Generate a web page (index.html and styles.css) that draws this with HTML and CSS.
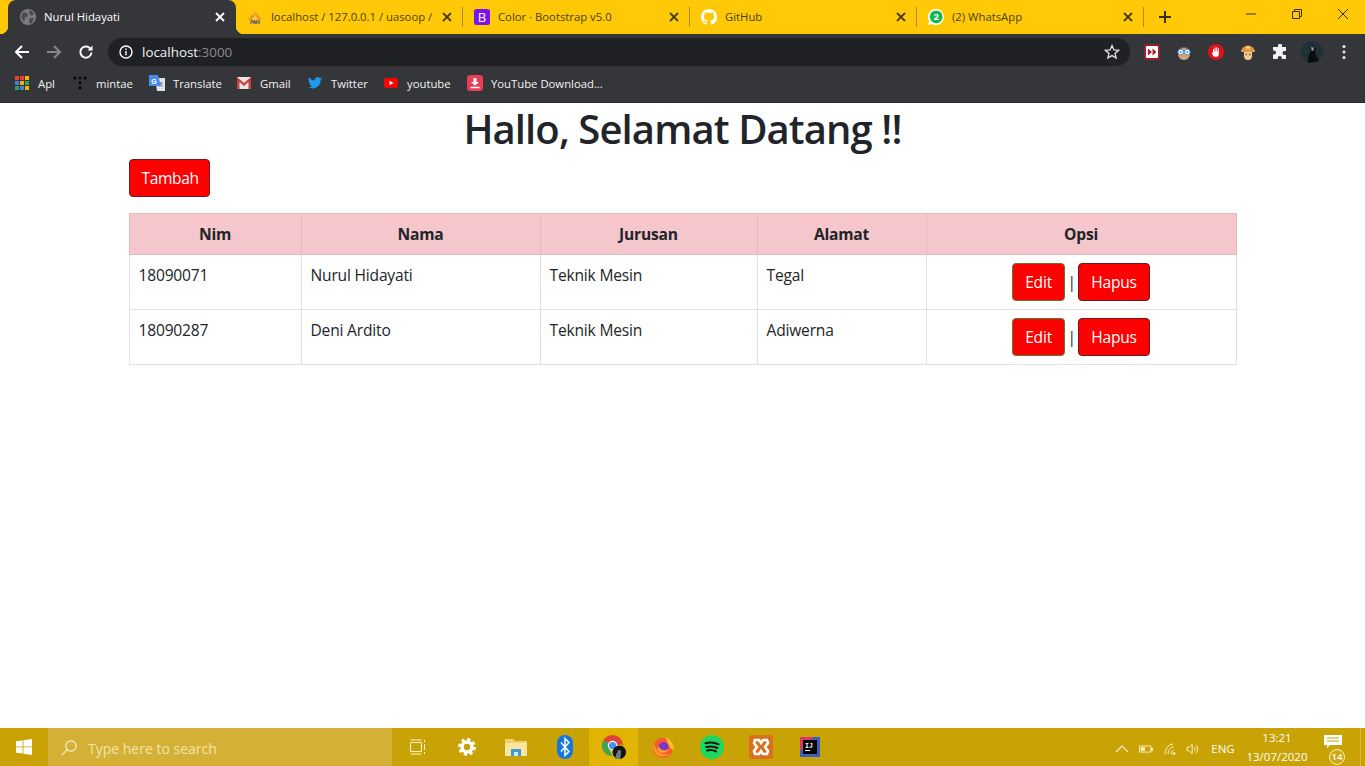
FILE: index.html
```html
<!DOCTYPE html>
<html lang="en">
<head>
  <meta charset="UTF-8" />
  <meta name="viewport" content="width=device-width, initial-scale=1.0"/>
  <title>Nurul Hidayati</title>
  <link rel="stylesheet" href="styles.css">
</head>
<body>
  <div class="browser">
    <div class="tabstrip">
      <div class="tab active">
        <svg class="favicon" viewBox="0 0 16 16"><circle cx="8" cy="8" r="8" fill="#7b7d82"/><path d="M3 3l4 1 1 3-3 2-1 4-3-5zM10 1l4 3-2 3-2-1-1-3zM10 9l4 0-2 5-2 1-1-3z" fill="#4a4c50"/></svg>
        <span class="tab-title">Nurul Hidayati</span>
        <svg class="tab-close" viewBox="0 0 10 10"><path d="M1 1l8 8M9 1l-8 8"/></svg>
      </div>
      <div class="tab">
        <svg class="favicon" viewBox="0 0 16 16"><path d="M1 11L6 4l1 2 2-4 1 4 1-1 4 6z" fill="#f29a1f"/><path d="M5 11l3-5 3 5z" fill="#fbc65a"/><rect x="0" y="11.5" width="16" height="3.5" fill="#ffc907"/><text x="8" y="15" class="pma">PMA</text></svg>
        <span class="tab-title">localhost / 127.0.0.1 / uasoop /</span>
        <svg class="tab-close" viewBox="0 0 10 10"><path d="M1 1l8 8M9 1l-8 8"/></svg>
      </div>
      <span class="tab-sep"></span>
      <div class="tab">
        <svg class="favicon" viewBox="0 0 16 16"><rect width="16" height="16" rx="2.5" fill="#7b14ea"/><text x="8" y="12.6" class="boot">B</text></svg>
        <span class="tab-title">Color · Bootstrap v5.0</span>
        <svg class="tab-close" viewBox="0 0 10 10"><path d="M1 1l8 8M9 1l-8 8"/></svg>
      </div>
      <span class="tab-sep"></span>
      <div class="tab">
        <svg class="favicon" viewBox="0 0 16 16"><path fill="#fff" d="M8 0C3.58 0 0 3.58 0 8c0 3.54 2.29 6.53 5.47 7.59.4.07.55-.17.55-.38 0-.19-.01-.82-.01-1.49-2.01.37-2.53-.49-2.69-.94-.09-.23-.48-.94-.82-1.13-.28-.15-.68-.52-.01-.53.63-.01 1.08.58 1.23.82.72 1.21 1.87.87 2.33.66.07-.52.28-.87.51-1.07-1.78-.2-3.64-.89-3.64-3.95 0-.87.31-1.59.82-2.15-.08-.2-.36-1.02.08-2.12 0 0 .67-.21 2.2.82.64-.18 1.32-.27 2-.27.68 0 1.36.09 2 .27 1.53-1.04 2.2-.82 2.2-.82.44 1.1.16 1.92.08 2.12.51.56.82 1.27.82 2.15 0 3.07-1.87 3.75-3.65 3.95.29.25.54.73.54 1.48 0 1.07-.01 1.93-.01 2.2 0 .21.15.46.55.38A8.013 8.013 0 0016 8c0-4.42-3.58-8-8-8z"/></svg>
        <span class="tab-title">GitHub</span>
        <svg class="tab-close" viewBox="0 0 10 10"><path d="M1 1l8 8M9 1l-8 8"/></svg>
      </div>
      <span class="tab-sep"></span>
      <div class="tab">
        <svg class="favicon" viewBox="0 0 16 16"><path d="M8 0a8 8 0 0 0-6.8 12.2L0 16l3.9-1.1A8 8 0 1 0 8 0z" fill="#fff"/><circle cx="8.2" cy="7.8" r="6.4" fill="#12b84f"/><text x="8.2" y="11.2" class="wa">2</text></svg>
        <span class="tab-title">(2) WhatsApp</span>
        <svg class="tab-close" viewBox="0 0 10 10"><path d="M1 1l8 8M9 1l-8 8"/></svg>
      </div>
      <span class="tab-sep"></span>
      <svg class="new-tab" viewBox="0 0 12 12"><path d="M6 0v12M0 6h12"/></svg>
      <div class="window-controls">
        <svg viewBox="0 0 46 28"><path d="M19 14h10"/></svg>
        <svg viewBox="0 0 46 28"><path d="M19.5 11.5h7v7h-7zM21.5 11.5v-2h7v7h-2"/></svg>
        <svg viewBox="0 0 46 28"><path d="M19 9l10 10M29 9L19 19"/></svg>
      </div>
    </div>

    <div class="toolbar">
      <svg class="nav-icon" viewBox="0 0 16 16"><path d="M15 8H2M8 2L2 8l6 6"/></svg>
      <svg class="nav-icon off" viewBox="0 0 16 16"><path d="M1 8h13M8 2l6 6-6 6"/></svg>
      <svg class="nav-icon" viewBox="0 0 16 16"><path d="M13.5 8.5A5.6 5.6 0 1 1 12 4.2"/><path class="solid" d="M14.5 1.5v5h-5z"/></svg>
      <div class="omnibox">
        <svg class="info" viewBox="0 0 14 14"><circle cx="7" cy="7" r="6"/><path d="M7 6v4.2M7 3.4V5"/></svg>
        <span class="url">localhost<span class="port">:3000</span></span>
        <svg class="star" viewBox="0 0 16 16"><path d="M8 1.6l1.9 4.3 4.7.4-3.6 3.1 1.1 4.6L8 11.6 3.9 14 5 9.4 1.4 6.3l4.7-.4z"/></svg>
      </div>
      <div class="extensions">
        <svg viewBox="0 0 16 16"><rect width="16" height="16" rx="2" fill="#8f2430"/><rect x="2" y="2" width="12" height="12" rx="1" fill="#fff"/><path d="M4 4.5L8 8l-4 3.5zM8.5 4.5L12.5 8l-4 3.5z" fill="#b3172c"/></svg>
        <svg viewBox="0 0 16 16"><path d="M3 6C3 2 13 2 13 6z" fill="#8a5a35"/><circle cx="8" cy="10" r="6" fill="#d9a273"/><circle cx="4.7" cy="8" r="2.8" fill="#fff" stroke="#3f8fd8"/><circle cx="11.3" cy="8" r="2.8" fill="#fff" stroke="#3f8fd8"/><circle cx="4.7" cy="8" r="1" fill="#3f8fd8"/><circle cx="11.3" cy="8" r="1" fill="#3f8fd8"/></svg>
        <svg viewBox="0 0 16 16"><circle cx="8" cy="8" r="8" fill="#e0101c"/><path d="M5 8V5h1v2h.6V3.5h1V7h.6V3.2h1V7h.6V4.3h1V10c0 2-1 3-3 3s-2.5-1-4-4l1-.5z" fill="#fff"/></svg>
        <svg viewBox="0 0 16 16"><path d="M1 8a7 6.5 0 0 1 14 0z" fill="#e59a45"/><circle cx="8" cy="3.5" r="1.500" fill="#f6d9a8"/><path d="M4 8h8v4a4 4 0 0 1-8 0z" fill="#f3c892"/><circle cx="6.3" cy="10.5" r=".8" fill="#5b3a1e"/><circle cx="9.7" cy="10.5" r=".8" fill="#5b3a1e"/></svg>
        <svg viewBox="0 0 16 16"><path d="M6 1.5a2 2 0 0 1 4 0V3h4v4h-1.5a2 2 0 0 0 0 4H14v4H9.8v-1a2 2 0 0 0-4 0v1H1v-4.5h1a2 2 0 0 0 0-4H1V3h5z" fill="#f1f3f4"/></svg>
        <svg class="avatar" viewBox="0 0 22 22"><circle cx="11" cy="11" r="11" fill="#203238"/><path d="M7 22c0-6 1-9 3-12L9 7l3-2 3 3-1 4 4 8z" fill="#0a0d10"/><path d="M10 6l3 .5-.5 3.5-2-.5z" fill="#8b9a9a"/></svg>
        <svg class="menu-dots" viewBox="0 0 4 16"><circle cx="2" cy="2.5" r="1.5"/><circle cx="2" cy="8" r="1.5"/><circle cx="2" cy="13.5" r="1.5"/></svg>
      </div>
    </div>

    <div class="bookmarks">
      <div class="bookmark">
        <svg viewBox="0 0 14 14"><path d="M0 0h4v4H0z" fill="#e5432f"/><path d="M5 0h4v4H5z" fill="#e5432f"/><path d="M10 0h4v4h-4z" fill="#f5b400"/><path d="M0 5h4v4H0z" fill="#3f7fe8"/><path d="M5 5h4v4H5z" fill="#f5b400"/><path d="M10 5h4v4h-4z" fill="#2fa34f"/><path d="M0 10h4v4H0z" fill="#2fa34f"/><path d="M5 10h4v4H5z" fill="#3f7fe8"/><path d="M10 10h4v4h-4z" fill="#f5b400"/></svg>
        <span>Apl</span>
      </div>
      <div class="bookmark">
        <svg viewBox="0 0 14 14"><g fill="#0a0a0a"><circle cx="2" cy="2" r="1.5"/><circle cx="7" cy="2" r="1.5"/><circle cx="12" cy="2" r="1.5"/><circle cx="7" cy="7" r="1.5"/><circle cx="7" cy="12" r="1.7"/></g></svg>
        <span>mintae</span>
      </div>
      <div class="bookmark">
        <svg class="wide" viewBox="0 0 16 16"><path d="M6 3h10v13H8z" fill="#dfe3ea"/><path d="M0 0h9l3 11H0z" fill="#4a8af0"/><text x="5" y="8.5" class="gt">G</text><path d="M10.5 8H14M12 7v1c0 2-1 3-2 3.5M11 9c.5 1 1.5 2 2.8 2.5" stroke="#7a808c" fill="none"/></svg>
        <span>Translate</span>
      </div>
      <div class="bookmark">
        <svg viewBox="0 0 14 12"><rect width="14" height="12" fill="#e8e6e3"/><path d="M0 0l7 6 7-6v12h-2.5V5L7 9 2.5 5v7H0z" fill="#c8413a"/></svg>
        <span>Gmail</span>
      </div>
      <div class="bookmark">
        <svg viewBox="0 0 16 14"><path fill="#1d9bf0" d="M16 1.7a6.5 6.5 0 0 1-1.900.5A3.3 3.3 0 0 0 15.500.4a6.500 6.500 0 0 1-2.100.8 3.300 3.300 0 0 0-5.600 3A9.300 9.300 0 0 1 1.100.8a3.300 3.300 0 0 0 1 4.400 3.300 3.300 0 0 1-1.500-.4 3.300 3.300 0 0 0 2.600 3.200 3.300 3.300 0 0 1-1.500.1 3.300 3.300 0 0 0 3.100 2.300A6.600 6.600 0 0 1 0 11.700 9.300 9.300 0 0 0 14.400 3.400 6.600 6.600 0 0 0 16 1.700z"/></svg>
        <span>Twitter</span>
      </div>
      <div class="bookmark">
        <svg viewBox="0 0 14 10"><rect width="14" height="10" rx="2.5" fill="#f00"/><path d="M5.5 2.800L9.500 5l-4 2.200z" fill="#fff"/></svg>
        <span>youtube</span>
      </div>
      <div class="bookmark">
        <svg class="wide" viewBox="0 0 16 16"><rect width="16" height="16" rx="3" fill="#ea3d56"/><path d="M6.500 3h3v4H12L8 10.800 4 7h2.500zM3.500 11.800h9v1.500h-9z" fill="#fff"/></svg>
        <span>YouTube Download...</span>
      </div>
    </div>
  </div>

  <main class="content">
    <h1>Hallo, Selamat Datang !!</h1>
    <button class="btn btn-add">Tambah</button>
    <table class="data-table">
      <thead>
        <tr>
          <th class="col-nim">Nim</th>
          <th class="col-nama">Nama</th>
          <th class="col-jurusan">Jurusan</th>
          <th class="col-alamat">Alamat</th>
          <th>Opsi</th>
        </tr>
      </thead>
      <tbody>
        <tr>
          <td>18090071</td>
          <td>Nurul Hidayati</td>
          <td>Teknik Mesin</td>
          <td>Tegal</td>
          <td class="actions"><button class="btn btn-edit">Edit</button> | <button class="btn">Hapus</button></td>
        </tr>
        <tr>
          <td>18090287</td>
          <td>Deni Ardito</td>
          <td>Teknik Mesin</td>
          <td>Adiwerna</td>
          <td class="actions"><button class="btn btn-edit">Edit</button> | <button class="btn">Hapus</button></td>
        </tr>
      </tbody>
    </table>
  </main>

  <footer class="taskbar">
    <div class="start">
      <svg viewBox="0 0 16 16"><path d="M0 2.300L6.600 1.400v6.100H0zM7.400 1.300L16 0v7.500H7.400zM0 8.300h6.600v6.300L0 13.700zM7.400 8.300H16V16l-8.600-1.200z"/></svg>
    </div>
    <div class="search">
      <svg viewBox="0 0 16 16"><circle cx="10" cy="6" r="5.200"/><path d="M6.300 9.700L.6 15.400"/></svg>
      <span>Type here to search</span>
    </div>
    <div class="pinned">
      <div class="pin">
        <svg class="line" viewBox="0 0 16 16"><path d="M.5 3.500h11v9H.5zM.5 1h11M.5 15h11M14.500 1v2M14.500 5v6M14.500 13v2"/></svg>
      </div>
      <div class="pin">
        <svg class="gear" viewBox="0 0 18 18"><circle cx="9" cy="9" r="5" fill="none" stroke="#fff" stroke-width="3.400"/><circle cx="9" cy="9" r="7.400" fill="none" stroke="#fff" stroke-width="3" stroke-dasharray="3.100 2.710"/></svg>
      </div>
      <div class="pin">
        <svg class="big" viewBox="0 0 22 20"><path d="M0 2h8l2 2h12v4H0z" fill="#f4cf6b"/><path d="M0 6h22v13H0z" fill="#fbe6a0"/><path d="M6 12h10v7H6z" fill="#3f9ad6"/><path d="M9 15h4v4H9z" fill="#cde6f5"/></svg>
      </div>
      <div class="pin">
        <svg class="tall" viewBox="0 0 16 24"><rect width="16" height="24" rx="8" fill="#1377e0"/><path d="M4 7.500l8 9-4 4v-17l4 4-8 9" fill="none" stroke="#fff" stroke-width="1.500"/></svg>
      </div>
      <div class="pin current">
        <svg class="wide" viewBox="0 0 25 25"><circle cx="11" cy="11" r="11" fill="#dc4437"/><path d="M11 11L1.500 5.500A11 11 0 0 0 11 22l5-11z" fill="#3da650"/><path d="M11 11l10-1A11 11 0 0 1 11 22l-3-6z" fill="#f7c31b"/><circle cx="11" cy="11" r="5" fill="#fff"/><circle cx="11" cy="11" r="3.800" fill="#4b8df0"/><circle cx="18" cy="18" r="7" fill="#101418"/><path d="M14 25c0-4 2-9 4-10l2 2-1 8z" fill="#6b7a80"/></svg>
      </div>
      <div class="pin">
        <svg class="big" viewBox="0 0 24 24"><circle cx="12" cy="13" r="11" fill="#ff5a2e"/><path d="M15 0c1 3 8 5 8.500 13 .2 3-2 2-3.500 0-1-3-4-6-5-13z" fill="#ffc41f"/><path d="M2 8c-1 5 0 9 4 13 3 2 9 2 13-2-4 2-10 1-13-3-2-2-3-5-4-8z" fill="#ff9a2a"/><circle cx="12.500" cy="12" r="5.500" fill="#7a37c8"/><path d="M7 11c2 5 7 6 11 3-1 5-8 6-11 2-1-1-1-3 0-5z" fill="#ffa12a"/></svg>
      </div>
      <div class="pin">
        <svg class="wide" viewBox="0 0 24 24"><circle cx="12" cy="12" r="12" fill="#1ed760"/><path d="M5.500 8.300c4.500-1.300 9-1 13 1M6.300 12c3.800-1 7.700-.8 11 1M7 15.500c3-.8 6.300-.6 9 .9" fill="none" stroke="#101010" stroke-width="2" stroke-linecap="round"/></svg>
      </div>
      <div class="pin">
        <svg class="wide" viewBox="0 0 24 24"><rect width="24" height="24" rx="2" fill="#d9701f"/><path d="M6 5h4l2 3 2-3h4l1 3-3 4 3 4-1 3h-4l-2-3-2 3H6l-1-3 3-4-3-4z" fill="none" stroke="#fff" stroke-width="2.600"/></svg>
      </div>
      <div class="pin">
        <svg class="ide" viewBox="0 0 20 20"><rect width="20" height="20" fill="#3463c4"/><path d="M0 0h14L0 14z" fill="#d8356a"/><rect x="3" y="3" width="14" height="14" fill="#000"/><text x="5" y="10.500" class="ij">IJ</text><path d="M5 13.500h5" stroke="#fff"/></svg>
      </div>
    </div>
    <div class="tray">
      <svg class="tray-icon chevron" viewBox="0 0 14 8"><path d="M1 7l6-6 6 6"/></svg>
      <svg class="tray-icon" viewBox="0 0 16 10"><path d="M.5 1.500h13v7H.5zM14 4h1.500v3H14z"/><path class="solid" d="M2 3h5v4H2z"/></svg>
      <svg class="tray-icon wifi" viewBox="0 0 16 14"><path d="M1 13A11 11 0 0 1 11 1M4.500 13A8 8 0 0 1 11 4.500M8 13a4 4 0 0 1 3-4.500"/><path class="solid" d="M10 11h3v2.500h-3z"/></svg>
      <svg class="tray-icon volume" viewBox="0 0 16 14"><path d="M1 5h2.500L7 1.500v11L3.500 9H1zM9.500 4.500a3.500 3.500 0 0 1 0 5M11.500 2.500a6 6 0 0 1 0 9"/></svg>
      <span class="lang">ENG</span>
      <div class="clock"><span>13:21</span><span>13/07/2020</span></div>
      <div class="notify">
        <svg viewBox="0 0 18 14"><path d="M0 0h18v10H6l-3 3v-3H0z" fill="#fff"/><path d="M3 3h12M3 6h12" stroke="#c9a206"/></svg>
        <span class="badge">14</span>
      </div>
      <span class="show-desktop"></span>
    </div>
  </footer>
</body>
</html>
```

FILE: styles.css
```css
* {
  box-sizing: border-box;
}

body {
  font-family: "Open Sans", "Noto Sans", sans-serif;
  background: white;
  color: #212529;
  margin: 0;
  height: 766px;
  overflow: hidden;
  display: flex;
  flex-direction: column;
}

/* browser frame */
.browser {
  background: #35363a;
  height: 103px;
  border-bottom: 1px solid #26272a;
  flex-shrink: 0;
}

.tabstrip {
  height: 34px;
  background: #ffc907;
  padding-left: 8px;
  display: flex;
  align-items: center;
}

.tab {
  width: 226px;
  height: 34px;
  padding: 0 10px 0 11px;
  display: flex;
  align-items: center;
  gap: 8px;
  color: #4d4010;
  font-size: 11.3px;
}

.tab.active {
  width: 228px;
  padding: 0 11px 0 12px;
  background: #35363a;
  color: white;
  border-radius: 8px 8px 0 0;
  position: relative;
}

.tab.active::before,
.tab.active::after {
  content: "";
  position: absolute;
  bottom: 0;
  width: 8px;
  height: 8px;
}

.tab.active::before {
  left: -8px;
  background: radial-gradient(circle at 0 0, transparent 8px, #35363a 8.5px);
}

.tab.active::after {
  right: -8px;
  background: radial-gradient(circle at 100% 0, transparent 8px, #35363a 8.5px);
}

.favicon {
  width: 16px;
  height: 16px;
  flex-shrink: 0;
}

.tab-title {
  flex: 1;
  min-width: 0;
  margin-top: -1px;
  white-space: nowrap;
}

.tab-close {
  width: 10px;
  height: 10px;
  flex-shrink: 0;
  fill: none;
  stroke: #4a3d0c;
  stroke-width: 1.8;
}

.tab.active .tab-close {
  stroke: white;
}

.tab-sep {
  width: 1px;
  height: 20px;
  background: #a98c1c;
  flex-shrink: 0;
}

.new-tab {
  width: 12px;
  height: 12px;
  margin-left: 15px;
  fill: none;
  stroke: #3a3008;
  stroke-width: 2;
}

.window-controls {
  margin-left: auto;
  display: flex;
  align-self: flex-start;
}

.window-controls svg {
  width: 46px;
  height: 28px;
  fill: none;
  stroke: #3a3008;
  stroke-width: 1;
}

.pma {
  font: italic 700 4.5px "Liberation Sans", sans-serif;
  text-anchor: middle;
  fill: #2b3a8c;
}

.boot {
  font: 500 13px "Open Sans", sans-serif;
  text-anchor: middle;
  fill: white;
}

.wa {
  font: 700 9.5px "Open Sans", sans-serif;
  text-anchor: middle;
  fill: white;
}

.toolbar {
  height: 32px;
  display: flex;
  align-items: flex-start;
  padding: 4px 0 0 14px;
}

.nav-icon {
  width: 16px;
  height: 16px;
  margin: 6px 16px 0 0;
  flex-shrink: 0;
  fill: none;
  stroke: white;
  stroke-width: 2;
}

.nav-icon.off {
  stroke: #85878b;
}

.nav-icon .solid {
  fill: white;
  stroke: none;
}

.omnibox {
  width: 1022px;
  height: 28px;
  margin-left: -2px;
  background: #202124;
  border-radius: 14px;
  padding: 0 10px 0 11px;
  display: flex;
  align-items: center;
  font-size: 13.4px;
  color: #f1f3f4;
}

.info {
  width: 14px;
  height: 14px;
  margin-right: 9px;
  fill: none;
  stroke: white;
  stroke-width: 1.4;
}

.url {
  flex: 1;
}

.port {
  color: #8a8c90;
}

.star {
  width: 16px;
  height: 16px;
  fill: none;
  stroke: #e3e5e7;
  stroke-width: 1.3;
}

.extensions {
  display: flex;
  align-items: center;
  height: 28px;
  gap: 16px;
  margin-left: 14px;
}

.extensions svg {
  width: 16px;
  height: 16px;
}

.extensions .avatar {
  width: 22px;
  height: 22px;
  margin: 0 -3px;
}

.extensions .menu-dots {
  width: 4px;
  height: 16px;
  margin-left: 6px;
  fill: #e8eaed;
}

.bookmarks {
  height: 36px;
  padding: 0 0 2px 15px;
  display: grid;
  grid-template-columns: 58px 76px 88px 71px 76px 83px 160px;
  align-items: center;
  font-size: 11.3px;
  color: #f1f3f4;
}

.bookmark {
  display: flex;
  align-items: center;
  gap: 9px;
  white-space: nowrap;
}

.bookmark svg {
  width: 14px;
  height: 14px;
  flex-shrink: 0;
}

.bookmark svg.wide {
  width: 16px;
  height: 16px;
}

.bookmark svg.wide + span {
  margin-left: -1px;
}

.gt {
  font: 700 7px "Liberation Sans", sans-serif;
  text-anchor: middle;
  fill: white;
}

/* page */
.content {
  flex: 1;
  width: 1108px;
  margin: 0 auto;
}

h1 {
  margin: 0;
  padding-top: 1px;
  height: 56px;
  text-align: center;
  font-size: 40px;
  font-weight: 600;
  letter-spacing: -0.9px;
  line-height: 50px;
}

.btn {
  font-family: inherit;
  font-size: 15.6px;
  letter-spacing: -0.2px;
  line-height: 24px;
  height: 38px;
  padding: 0 12px;
  color: white;
  background: #ff0000;
  border: 1px solid #6d1a22;
  border-radius: 4px;
  cursor: pointer;
}

.btn-edit {
  border-color: #5f7a35;
}

.btn-add {
  display: block;
  width: 81px;
  margin-bottom: 16px;
  letter-spacing: -0.4px;
}

.data-table {
  width: 1108px;
  table-layout: fixed;
  border-collapse: collapse;
  font-size: 15.6px;
  letter-spacing: -0.2px;
}

.data-table th,
.data-table td {
  border: 1px solid #dee2e6;
  line-height: 24px;
  padding: 8px 9px;
  text-align: left;
  vertical-align: top;
  height: 55px;
}

.data-table th {
  height: 41px;
  background: #f5c6cb;
  border-color: #e3bcc3;
  font-weight: 700;
  text-align: center;
}

.col-nim {
  width: 172px;
}

.col-nama {
  width: 239px;
}

.col-jurusan {
  width: 217px;
}

.col-alamat {
  width: 169px;
}

.data-table .actions {
  text-align: center;
  white-space: nowrap;
  word-spacing: -1.5px;
}

/* windows taskbar */
.taskbar {
  height: 38px;
  flex-shrink: 0;
  background: #c9a206;
  display: flex;
  align-items: stretch;
  color: white;
}

.start {
  width: 48px;
  display: flex;
  align-items: center;
  justify-content: center;
}

.start svg {
  width: 16px;
  height: 16px;
  fill: white;
}

.search {
  width: 344px;
  background: #d4b136;
  display: flex;
  align-items: center;
  gap: 11px;
  padding: 2px 0 0 13px;
  font-size: 14px;
  color: #f3e4a9;
}

.search svg {
  width: 16px;
  height: 16px;
  fill: none;
  stroke: #f7eec9;
  stroke-width: 1.2;
}

.pinned {
  display: grid;
  grid-template-columns: repeat(9, 49px);
  margin-left: 1px;
}

.pin {
  display: flex;
  align-items: center;
  justify-content: center;
}

.pin.current {
  background: #e0b400;
}

.pin .line {
  width: 16px;
  height: 16px;
  fill: none;
  stroke: #fdf3c9;
}

.pin .gear {
  width: 18px;
  height: 18px;
}

.pin .big {
  width: 22px;
  height: 22px;
}

.pin .wide {
  width: 24px;
  height: 24px;
}

.pin .ide {
  width: 20px;
  height: 20px;
}

.pin .tall {
  width: 16px;
  height: 24px;
}

.ij {
  font: 700 6.5px "Liberation Mono", monospace;
  fill: white;
}

.tray {
  margin-left: auto;
  display: flex;
  align-items: center;
}

.tray-icon {
  width: 14px;
  height: 12px;
  margin: 3px 11px 0 0;
  fill: none;
  stroke: #fdf3c9;
  stroke-width: 1.1;
}

.tray-icon.chevron {
  margin-right: 10px;
}

.tray-icon.wifi {
  margin-right: 8px;
}

.tray-icon.volume {
  margin-right: 3px;
}

.tray-icon .solid {
  fill: #fdf3c9;
  stroke: none;
}

.lang {
  font-size: 11.5px;
  margin-top: 2px;
  padding-left: 4px;
  width: 36px;
  text-align: center;
}

.clock {
  width: 76px;
  display: flex;
  flex-direction: column;
  align-items: center;
  font-size: 11.5px;
  line-height: 19px;
}

.notify {
  width: 36px;
  height: 100%;
  margin-right: 9px;
  padding-bottom: 10px;
  position: relative;
  display: flex;
  align-items: center;
  justify-content: center;
}

.notify svg {
  width: 18px;
  height: 14px;
}

.badge {
  position: absolute;
  right: 6px;
  bottom: 1px;
  width: 16px;
  height: 16px;
  border-radius: 50%;
  background: #cfa90f;
  border: 1px solid #fdf3c9;
  font-size: 9.5px;
  font-weight: 600;
  line-height: 14px;
  text-align: center;
}

.show-desktop {
  width: 5px;
  height: 100%;
  border-left: 1px solid #d8b83a;
}
```
